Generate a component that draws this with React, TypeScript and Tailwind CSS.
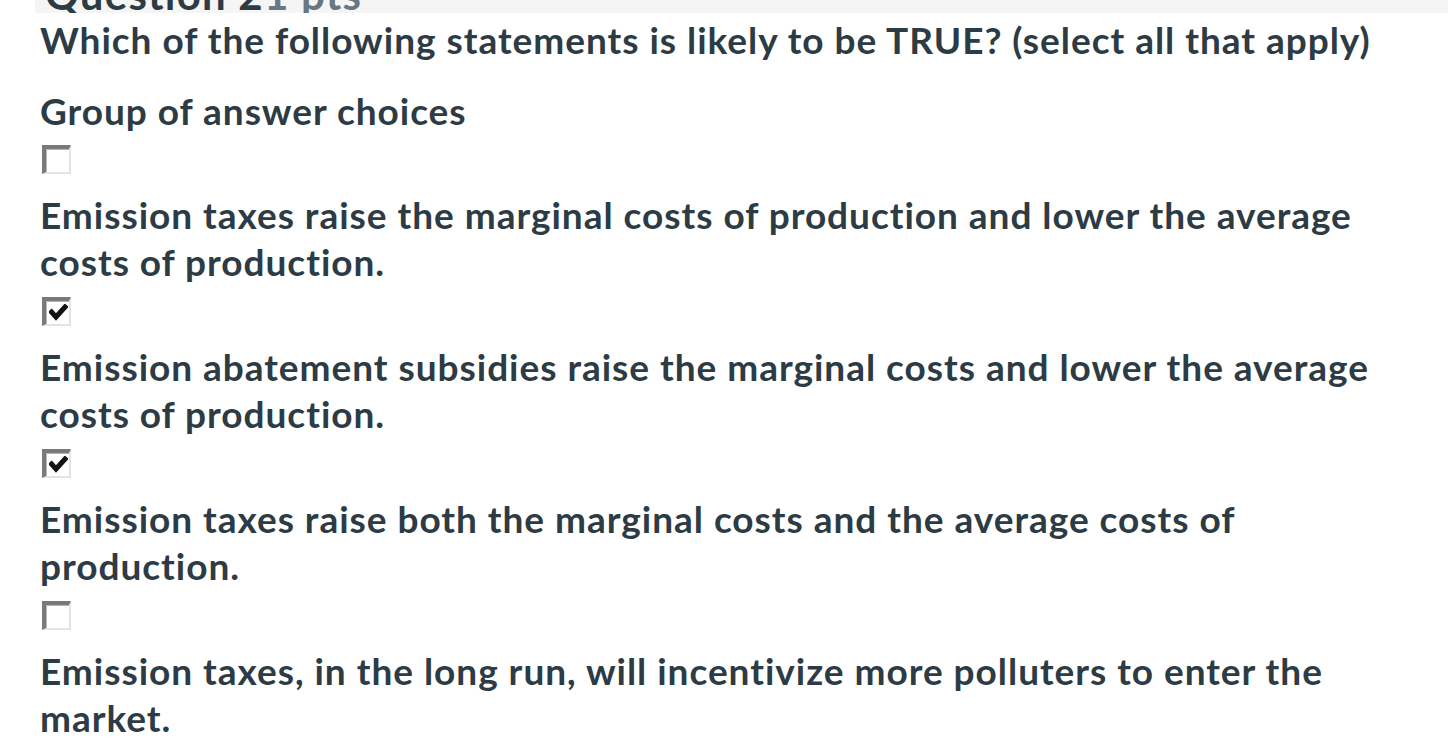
import React from "react";

function Box({ checked }: { checked: boolean }) {
  return (
    <div className="relative w-[29px] h-[29px] ml-[42px] bg-white border-t-[4px] border-l-[4px] border-r-[2px] border-b-[2px] border-t-[#7a7a7a] border-l-[#7a7a7a] border-r-[#e4e4e4] border-b-[#e4e4e4]">
      <div className="absolute inset-0 border-t-[1px] border-l-[1px] border-t-[#b5b5b5] border-l-[#b5b5b5]" />
      {checked && (
        <svg className="absolute left-[3px] top-[3px]" width="19" height="17" viewBox="0 0 19 17">
          <path d="M2.5 8 L7 13 L16 3" fill="none" stroke="#111" strokeWidth="5" strokeLinecap="square" strokeLinejoin="miter" />
        </svg>
      )}
    </div>
  );
}

const items = [
  { checked: false, lines: ["Emission taxes raise the marginal costs of production and lower the average", "costs of production."] },
  { checked: true, lines: ["Emission abatement subsidies raise the marginal costs and lower the average", "costs of production."] },
  { checked: true, lines: ["Emission taxes raise both the marginal costs and the average costs of", "production."] },
  { checked: false, lines: ["Emission taxes, in the long run, will incentivize more polluters to enter the", "market."] },
];

export default function App() {
  return (
    <div className="w-[1456px] h-[746px] overflow-hidden bg-white font-['Lato',sans-serif] font-bold text-[#2d3b45]">
      <div className="ml-[35px] mr-[8px] h-[13px] bg-[#f5f5f5] overflow-hidden">
        <div className="pl-[10px] -mt-[27px] text-[42px] leading-none tracking-[1.2px] whitespace-nowrap">
          <span>Question 2</span>
          <span className="text-[#6b7780]">1 pts</span>
        </div>
      </div>
      <div className="mt-[4px] pl-[40px] text-[37px] leading-[46.5px] tracking-[0.97px] whitespace-nowrap">
        Which of the following statements is likely to be TRUE? (select all that apply)
      </div>
      <div className="mt-[24.5px] pl-[40px] text-[37px] leading-[46.5px] tracking-[0.97px] whitespace-nowrap">
        Group of answer choices
      </div>
      <div className="mt-[10.5px] flex flex-col">
        {items.map((it, i) => (
          <div key={i} className="flex flex-col pb-[11px]">
            <Box checked={it.checked} />
            <div className="mt-[18px] mb-[1px] pl-[40px] text-[37px] leading-[46.5px] tracking-[0.97px] whitespace-nowrap">
              {it.lines.map((l, j) => (
                <div key={j}>{l}</div>
              ))}
            </div>
          </div>
        ))}
      </div>
    </div>
  );
}
